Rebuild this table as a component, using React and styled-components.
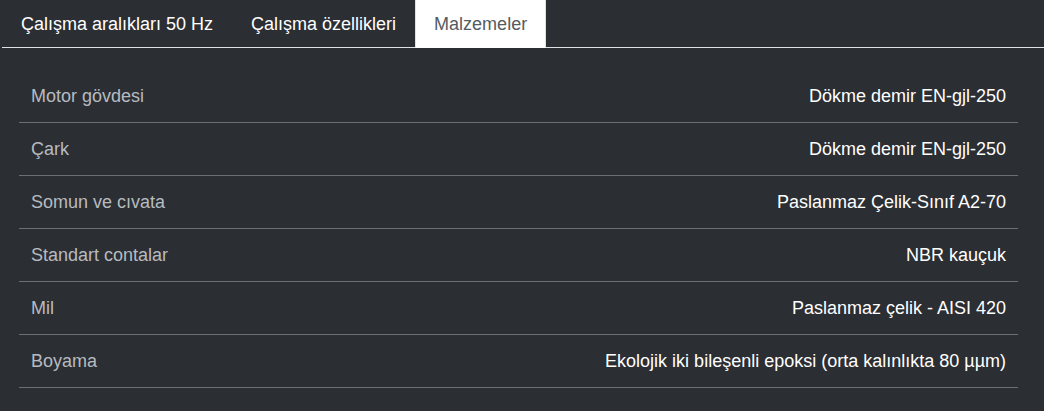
import React from "react";
import styled, { createGlobalStyle } from "styled-components";

const Global = createGlobalStyle`
  html, body { margin: 0; padding: 0; background: #2b2e33; }
  body { font-family: "Liberation Sans", Arial, sans-serif; }
`;

const Page = styled.div`
  width: 1044px;
  height: 411px;
  background: #2b2e33;
  overflow: hidden;
`;

const TabBar = styled.ul`
  list-style: none;
  margin: 0 0 0 2px;
  padding: 0;
  display: flex;
  border-bottom: 1px solid #dee2e6;
  height: 47px;
`;

const Tab = styled.li`
  box-sizing: border-box;
  height: 48px;
  margin-bottom: -1px;
  padding: 0 18px;
  display: flex;
  align-items: center;
  font-size: 18px;
  padding-top: 1px;
  color: ${(p) => (p.$active ? "#555b62" : "#ffffff")};
  background: ${(p) => (p.$active ? "#ffffff" : "transparent")};
  border: 1px solid ${(p) => (p.$active ? "#dee2e6" : "transparent")};
  border-bottom-color: ${(p) => (p.$active ? "#ffffff" : "transparent")};
  border-top: none;
`;

const Content = styled.div`
  padding: 22px 26px 0 19px;
`;

const Table = styled.div`
  display: flex;
  flex-direction: column;
`;

const Row = styled.div`
  display: flex;
  justify-content: space-between;
  align-items: center;
  padding: 12px 12px;
  line-height: 28px;
  font-size: 18px;
  border-bottom: 1px solid #6b6e72;
`;

const Label = styled.span`
  color: #b7bbc0;
`;

const Value = styled.span`
  color: #ffffff;
  text-align: right;
`;

const tabs = ["Çalışma aralıkları 50 Hz", "Çalışma özellikleri", "Malzemeler"];

const rows = [
  ["Motor gövdesi", "Dökme demir EN-gjl-250"],
  ["Çark", "Dökme demir EN-gjl-250"],
  ["Somun ve cıvata", "Paslanmaz Çelik-Sınıf A2-70"],
  ["Standart contalar", "NBR kauçuk"],
  ["Mil", "Paslanmaz çelik - AISI 420"],
  ["Boyama", "Ekolojik iki bileşenli epoksi (orta kalınlıkta 80 µµm)"],
];

export default function App() {
  return (
    <Page>
      <Global />
      <TabBar>
        {tabs.map((t, i) => (
          <Tab key={t} $active={i === 2}>
            {t}
          </Tab>
        ))}
      </TabBar>
      <Content>
        <Table>
          {rows.map(([l, v]) => (
            <Row key={l}>
              <Label>{l}</Label>
              <Value>{v}</Value>
            </Row>
          ))}
        </Table>
      </Content>
    </Page>
  );
}
